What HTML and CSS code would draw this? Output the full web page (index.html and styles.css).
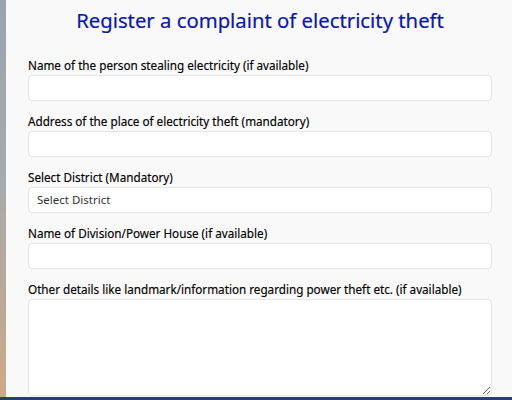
FILE: index.html
```html
<!DOCTYPE html>
<html>
<head>
<meta charset="utf-8">
<link rel="stylesheet" href="styles.css">
</head>
<body>
<div class="page">
  <div class="side"></div>
  <main class="panel">
    <h1 class="title">Register a complaint of electricity theft</h1>
    <form class="form">
      <div class="field">
        <label class="label">Name of the person stealing electricity (if available)</label>
        <input class="input" type="text">
      </div>
      <div class="field">
        <label class="label">Address of the place of electricity theft (mandatory)</label>
        <input class="input" type="text">
      </div>
      <div class="field">
        <label class="label">Select District (Mandatory)</label>
        <div class="input select">Select District</div>
      </div>
      <div class="field">
        <label class="label">Name of Division/Power House (if available)</label>
        <input class="input" type="text">
      </div>
      <div class="field">
        <label class="label">Other details like landmark/information regarding power theft etc. (if available)</label>
        <textarea class="input area"></textarea>
      </div>
    </form>
  </main>
</div>
<div class="bottombar"></div>
</body>
</html>
```
FILE: styles.css
```css
html, body {
  margin: 0;
  padding: 0;
  width: 512px;
  height: 400px;
  overflow: hidden;
  font-family: "Noto Sans", "Open Sans", sans-serif;
}
.page {
  display: flex;
  height: 397px;
}
.side {
  width: 6px;
  flex: none;
  background: linear-gradient(180deg, #9aa4ad 0%, #a7aaad 45%, #b9a998 75%, #cfa985 100%);
}
.panel {
  flex: 1;
  background: #f9f9f9;
  padding: 0 20px 0 22px;
  box-sizing: border-box;
}
.title {
  margin: 7px 0 0;
  font-size: 20.3px;
  font-weight: 400;
  color: #0c1aa8;
  text-align: center;
  line-height: 27px;
  -webkit-text-stroke: 0.2px #0c1aa8;
}
.form {
  margin-top: 23px;
  display: flex;
  flex-direction: column;
  gap: 12px;
}
.field {
  display: flex;
  flex-direction: column;
}
.label {
  font-size: 11.7px;
  line-height: 16px;
  margin-bottom: 2px;
  color: #000;
  -webkit-text-stroke: 0.15px #000;
}
.input {
  display: block;
  box-sizing: border-box;
  width: 100%;
  height: 26px;
  margin: 0;
  border: 1px solid #e6e6e6;
  border-radius: 4px;
  background: #fff;
  font-family: inherit;
}
.select {
  font-size: 11.5px;
  color: #333;
  padding: 0 8px;
  line-height: 24px;
}
.area {
  height: 97px;
  resize: vertical;
}
.bottombar {
  height: 3px;
  background: #263f6b;
}
```
